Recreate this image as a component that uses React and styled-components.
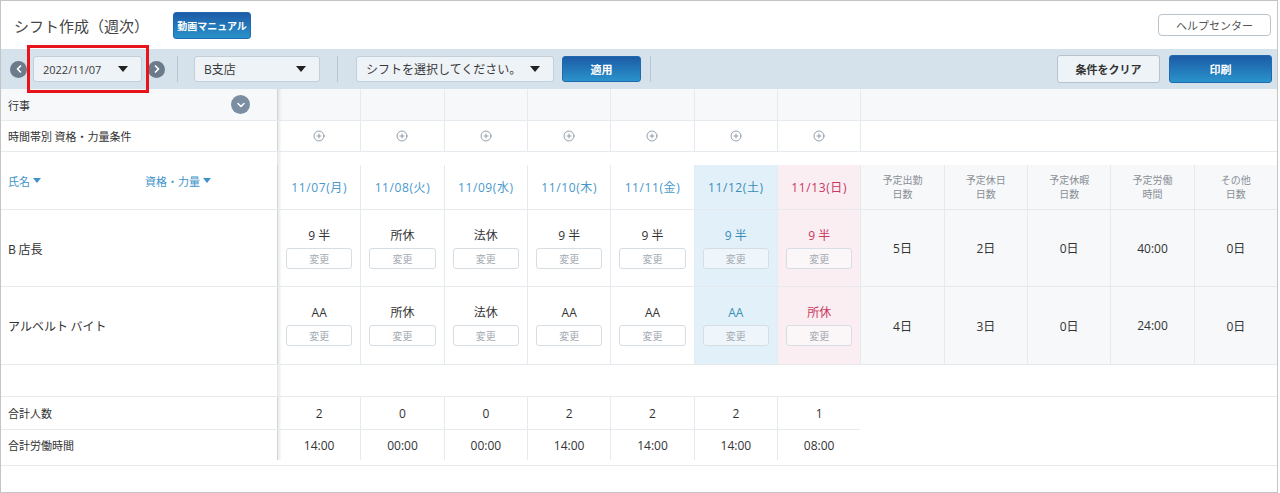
import React from 'react'
import styled, { createGlobalStyle, css } from 'styled-components'
import { ChevronLeft, ChevronRight, ChevronDown, CirclePlus } from 'lucide-react'

const GlobalStyle = createGlobalStyle`
    html, body {
        margin: 0;
        padding: 0;
        background: #ffffff;
    }
    body {
        font-family: "Open Sans", "Noto Sans CJK JP", sans-serif;
        color: #333;
    }
    * {
        box-sizing: border-box;
    }
`

const Frame = styled.div`
    position: relative;
    width: 1278px;
    height: 493px;
    border: 1px solid #c4c4c4;
    overflow: hidden;
`

const TitleBar = styled.div`
    height: 48px;
    display: flex;
    align-items: center;
    padding: 0 6px 0 13px;
`

const Title = styled.h1`
    margin: 0;
    font-size: 15px;
    font-weight: 400;
    color: #444;
    font-family: "Noto Sans CJK JP", sans-serif;
`

const blueGradient = css`
    background: linear-gradient(to bottom, #1c5ba6, #2a93cb);
    color: #ffffff;
    border: 1px solid #1f6aae;
`

const ManualButton = styled.button`
    ${blueGradient};
    margin-left: 24px;
    width: 78px;
    height: 27px;
    border-radius: 3px;
    font-size: 10px;
    font-weight: 700;
    font-family: "Noto Sans CJK JP", sans-serif;
    padding: 0;
`

const HelpButton = styled.button`
    margin-left: auto;
    width: 113px;
    height: 22px;
    background: #fff;
    border: 1px solid #b9c4cd;
    border-radius: 4px;
    font-size: 11px;
    color: #555;
    font-family: "Noto Sans CJK JP", sans-serif;
    padding: 0;
`

const Toolbar = styled.div`
    height: 40px;
    background: #d6e2eb;
    display: flex;
    align-items: center;
    padding: 0 5px 0 9px;
`

const RoundNav = styled.span`
    width: 17px;
    height: 17px;
    border-radius: 50%;
    background: #6c7b8b;
    display: inline-flex;
    align-items: center;
    justify-content: center;
    flex: none;
    margin-left: ${(p) => p.$ml || 0}px;
`

const Select = styled.div`
    width: ${(p) => p.$width}px;
    height: 26px;
    background: #eef3f7;
    border: 1px solid #c3cfd9;
    border-radius: 3px;
    display: flex;
    align-items: center;
    justify-content: space-between;
    padding: 0 13px 0 9px;
    margin-left: ${(p) => p.$ml || 0}px;
    font-size: ${(p) => p.$fs || 12}px;
    color: #3a3a3a;
    font-family: "Open Sans", "Noto Sans CJK JP", sans-serif;
    flex: none;
`

const Caret = styled.span`
    width: 0;
    height: 0;
    border-left: 5px solid transparent;
    border-right: 5px solid transparent;
    border-top: 6px solid #222;
`

const Divider = styled.span`
    width: 1px;
    height: 26px;
    background: #b9c6d0;
    margin: 0 ${(p) => p.$right || 16}px 0 ${(p) => p.$left || 12}px;
    flex: none;
`

const ToolButton = styled.button`
    width: ${(p) => p.$width}px;
    height: ${(p) => p.$height || 26}px;
    border-radius: 3px;
    font-size: 11px;
    font-weight: 700;
    font-family: "Noto Sans CJK JP", sans-serif;
    padding: 0;
    flex: none;
    margin-left: ${(p) => p.$ml || 0}px;
    ${(p) =>
        p.$primary
            ? blueGradient
            : css`
                  background: #eef3f7;
                  border: 1px solid #b6c3cd;
                  color: #333;
              `}
`

const Spacer = styled.span`
    flex: 1;
`

const Highlight = styled.div`
    position: absolute;
    left: 26px;
    top: 44px;
    width: 122px;
    height: 48px;
    border: 3px solid #e8141c;
    pointer-events: none;
`

const Row = styled.div`
    display: grid;
    grid-template-columns: 276px repeat(12, 1fr);
    height: ${(p) => p.$h}px;
    border-bottom: 1px solid #e5eaee;
    background: ${(p) => p.$bg || '#fff'};
`

const LeftCell = styled.div`
    position: relative;
    display: flex;
    align-items: center;
    padding: 0 7px;
    font-size: ${(p) => p.$fs || 11}px;
    color: #333;
    font-family: "Noto Sans CJK JP", sans-serif;
    z-index: 1;
    &::after {
        content: '';
        position: absolute;
        top: 0;
        bottom: 0;
        right: -5px;
        width: 5px;
        background: linear-gradient(to right, rgba(0, 0, 0, 0.1), rgba(0, 0, 0, 0));
    }
`

const dayTone = {
    sat: { bg: '#e2f1f9', fg: '#3a8cb6', btn: '#eef6fb' },
    sun: { bg: '#fbeef2', fg: '#c8375e', btn: '#fbf6f8' },
    summary: { bg: '#f6f8fa', fg: '#333', btn: '#fff' },
    normal: { bg: 'transparent', fg: '#333', btn: '#fff' },
}

const Cell = styled.div`
    border-left: 1px solid #e5eaee;
    display: flex;
    align-items: center;
    justify-content: center;
    font-size: 12px;
    color: ${(p) => dayTone[p.$tone || 'normal'].fg};
    background: ${(p) => dayTone[p.$tone || 'normal'].bg};
    grid-column: ${(p) => (p.$span ? `span ${p.$span}` : 'auto')};
`

const HeadCell = styled(Cell)`
    margin-top: 13px;
    letter-spacing: 0.6px;
    color: ${(p) => (p.$tone === 'sat' || p.$tone === 'sun' ? dayTone[p.$tone].fg : '#4a98cc')};
`

const SummaryHead = styled(Cell)`
    margin-top: 13px;
    flex-direction: column;
    font-size: 10px;
    line-height: 14px;
    color: #8a8f95;
    font-family: "Noto Sans CJK JP", sans-serif;
`

const ShiftCell = styled(Cell)`
    flex-direction: column;
    gap: 4px;
    padding: 0 8px;
`

const ShiftLabel = styled.span`
    font-size: 12px;
    line-height: 16px;
    font-family: "Open Sans", "Noto Sans CJK JP", sans-serif;
`

const ChangeButton = styled.button`
    width: 100%;
    height: 21px;
    border: 1px solid #d6dee4;
    border-radius: 3px;
    background: ${(p) => dayTone[p.$tone || 'normal'].btn};
    color: #a6adb4;
    font-size: 10px;
    font-family: "Noto Sans CJK JP", sans-serif;
    padding: 0;
`

const SortLabel = styled.span`
    display: inline-flex;
    align-items: center;
    gap: 3px;
    color: #3e93c9;
    font-size: 11px;
    font-family: "Noto Sans CJK JP", sans-serif;
    margin-left: ${(p) => p.$ml || 0}px;
`

const SortCaret = styled.span`
    width: 0;
    height: 0;
    border-left: 4px solid transparent;
    border-right: 4px solid transparent;
    border-top: 5px solid #3e93c9;
`

const EventToggle = styled.span`
    margin-left: auto;
    margin-right: 20px;
    width: 19px;
    height: 19px;
    border-radius: 50%;
    background: #7c8ea2;
    display: inline-flex;
    align-items: center;
    justify-content: center;
`

const TotalsRow = styled.div`
    display: grid;
    grid-template-columns: 276px repeat(12, 1fr);
    height: ${(p) => p.$h}px;
`

const TotalCell = styled(Cell)`
    border-top: ${(p) => (p.$top ? '1px solid #e5eaee' : 'none')};
`

const TotalLeft = styled(LeftCell)`
    border-top: ${(p) => (p.$top ? '1px solid #e5eaee' : 'none')};
`

const FooterLine = styled.div`
    margin-top: 5px;
    border-top: 1px solid #e5eaee;
`

const days = [
    { label: '11/07(月)', tone: 'normal' },
    { label: '11/08(火)', tone: 'normal' },
    { label: '11/09(水)', tone: 'normal' },
    { label: '11/10(木)', tone: 'normal' },
    { label: '11/11(金)', tone: 'normal' },
    { label: '11/12(土)', tone: 'sat' },
    { label: '11/13(日)', tone: 'sun' },
]

const summaryHeads = [
    ['予定出勤', '日数'],
    ['予定休日', '日数'],
    ['予定休暇', '日数'],
    ['予定労働', '時間'],
    ['その他', '日数'],
]

const staff = [
    {
        name: 'B 店長',
        shifts: ['9 半', '所休', '法休', '9 半', '9 半', '9 半', '9 半'],
        summary: ['5日', '2日', '0日', '40:00', '0日'],
        h: 77,
    },
    {
        name: 'アルベルト バイト',
        shifts: ['AA', '所休', '法休', 'AA', 'AA', 'AA', '所休'],
        summary: ['4日', '3日', '0日', '24:00', '0日'],
        h: 78,
    },
]

const totals = [
    { label: '合計人数', values: ['2', '0', '0', '2', '2', '2', '1'], h: 32 },
    { label: '合計労働時間', values: ['14:00', '00:00', '00:00', '14:00', '14:00', '14:00', '08:00'], h: 31 },
]

export default function App() {
    return (
        <Frame>
            <GlobalStyle />
            <TitleBar>
                <Title>シフト作成（週次）</Title>
                <ManualButton>動画マニュアル</ManualButton>
                <HelpButton>ヘルプセンター</HelpButton>
            </TitleBar>

            <Toolbar>
                <RoundNav>
                    <ChevronLeft size={12} color="#fff" strokeWidth={3.5} />
                </RoundNav>
                <Select $width={109} $ml={6} $fs={11}>
                    2022/11/07
                    <Caret />
                </Select>
                <RoundNav $ml={6}>
                    <ChevronRight size={12} color="#fff" strokeWidth={3.5} />
                </RoundNav>
                <Divider />
                <Select $width={126}>
                    B支店
                    <Caret />
                </Select>
                <Divider $left={17} $right={18} />
                <Select $width={198}>
                    シフトを選択してください。
                    <Caret />
                </Select>
                <ToolButton $primary $width={79} $ml={8}>
                    適用
                </ToolButton>
                <Divider $left={9} />
                <Spacer />
                <ToolButton $width={103} $height={28}>
                    条件をクリア
                </ToolButton>
                <ToolButton $primary $width={103} $height={28} $ml={9}>
                    印刷
                </ToolButton>
            </Toolbar>
            <Highlight />

            <Row $h={32} $bg="#f6f8fa">
                <LeftCell>
                    行事
                    <EventToggle>
                        <ChevronDown size={12} color="#fff" strokeWidth={3} />
                    </EventToggle>
                </LeftCell>
                {days.map((d) => (
                    <Cell key={d.label} />
                ))}
                <Cell $span={5} />
            </Row>

            <Row $h={31}>
                <LeftCell>時間帯別 資格・力量条件</LeftCell>
                {days.map((d) => (
                    <Cell key={d.label}>
                        <CirclePlus size={12} color="#7a8898" strokeWidth={1.6} />
                    </Cell>
                ))}
                <Cell $span={5} />
            </Row>

            <Row $h={58}>
                <LeftCell>
                    <SortLabel>
                        氏名
                        <SortCaret />
                    </SortLabel>
                    <SortLabel $ml={104}>
                        資格・力量
                        <SortCaret />
                    </SortLabel>
                </LeftCell>
                {days.map((d) => (
                    <HeadCell key={d.label} $tone={d.tone}>
                        {d.label}
                    </HeadCell>
                ))}
                {summaryHeads.map(([a, b]) => (
                    <SummaryHead key={a} $tone="summary">
                        <span>{a}</span>
                        <span>{b}</span>
                    </SummaryHead>
                ))}
            </Row>

            {staff.map((s) => (
                <Row key={s.name} $h={s.h}>
                    <LeftCell $fs={12}>{s.name}</LeftCell>
                    {s.shifts.map((shift, i) => (
                        <ShiftCell key={i} $tone={days[i].tone}>
                            <ShiftLabel>{shift}</ShiftLabel>
                            <ChangeButton $tone={days[i].tone}>変更</ChangeButton>
                        </ShiftCell>
                    ))}
                    {s.summary.map((v, i) => (
                        <Cell key={i} $tone="summary">
                            {v}
                        </Cell>
                    ))}
                </Row>
            ))}

            <Row $h={32}>
                <LeftCell />
            </Row>

            {totals.map((t, idx) => (
                <TotalsRow key={t.label} $h={t.h}>
                    <TotalLeft $top={idx > 0}>{t.label}</TotalLeft>
                    {t.values.map((v, i) => (
                        <TotalCell key={i} $top={idx > 0}>
                            {v}
                        </TotalCell>
                    ))}
                </TotalsRow>
            ))}
            <FooterLine />
        </Frame>
    )
}
